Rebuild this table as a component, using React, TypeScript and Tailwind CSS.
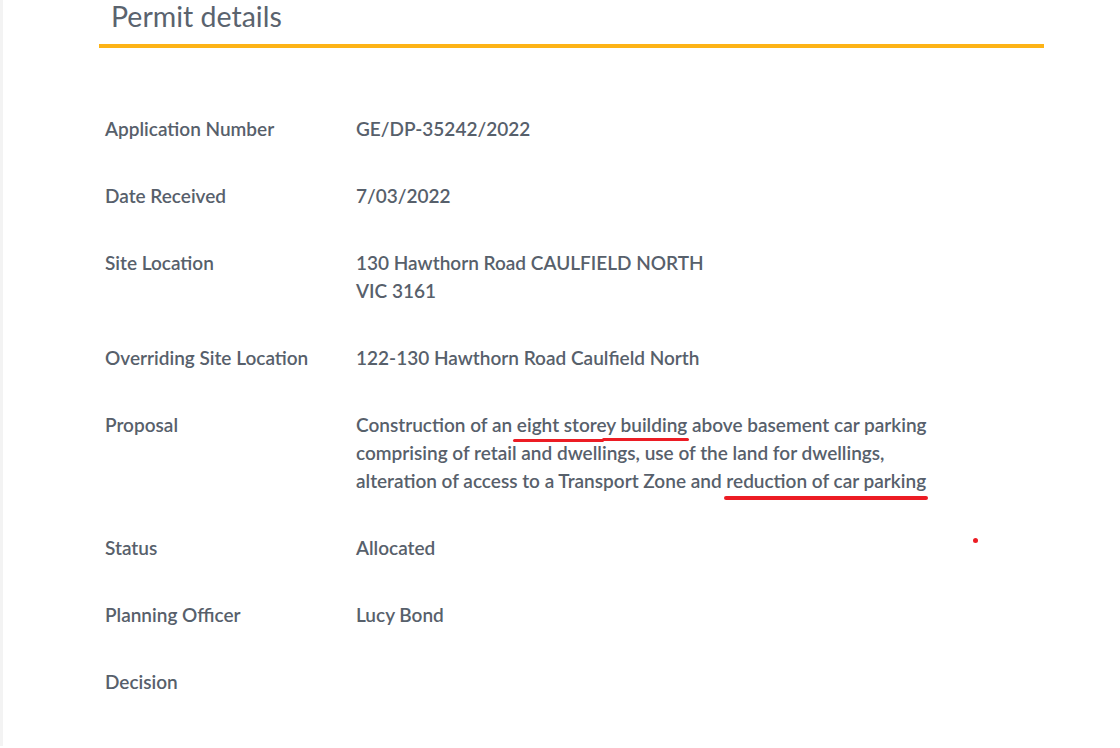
import React from "react";

const rows: { label: string; value?: React.ReactNode }[] = [
  { label: "Application Number", value: "GE/DP-35242/2022" },
  { label: "Date Received", value: "7/03/2022" },
  {
    label: "Site Location",
    value: (
      <>
        130 Hawthorn Road CAULFIELD NORTH
        <br />
        VIC 3161
      </>
    ),
  },
  { label: "Overriding Site Location", value: "122-130 Hawthorn Road Caulfield North" },
  {
    label: "Proposal",
    value: (
      <>
        Construction of an{" "}
        <span className="relative">
          eight storey building
          <span className="absolute left-[-4px] w-[calc(50%+6px)] bottom-[-6px] h-[3px] rounded-full bg-[#ec1c24]" />
          <span className="absolute left-1/2 right-[-2px] bottom-[-5px] h-[3px] rounded-full bg-[#ec1c24]" />
        </span>{" "}
        above basement car parking
        <br />
        comprising of retail and dwellings, use of the land for dwellings,
        <br />
        alteration of access to a Transport Zone and{" "}
        <span className="relative">
          reduction of car parking
          <span className="absolute -left-0.5 -right-0.5 bottom-[-8px] h-[4px] rounded-full bg-[#ec1c24]" />
        </span>
      </>
    ),
  },
  { label: "Status", value: "Allocated" },
  { label: "Planning Officer", value: "Lucy Bond" },
  { label: "Decision" },
];

function PermitDetails() {
  return (
    <div className="relative min-h-[748px] bg-white border-l-[3px] border-[#f3f3f3] font-['Lato','Open_Sans',sans-serif] text-[#57606b]">
      <div className="ml-[96px] w-[945px]">
        <h2 className="pl-3 text-[28.5px] leading-[36px] pb-2 -mt-0.5 text-[#5a636e]">Permit details</h2>
        <div className="h-1 mt-0.5 bg-[#fdb316]" />

        <div className="mt-[67px] pl-[6px] flex flex-col gap-[39px] text-[19px] leading-[28px] font-semibold">
          {rows.map((r) => (
            <div key={r.label} className="flex">
              <div className="w-[251px] shrink-0">{r.label}</div>
              <div>{r.value}</div>
            </div>
          ))}
        </div>
      </div>

      {/* stray red dot */}
      <span className="absolute left-[970px] top-[540px] w-[5px] h-[5px] rounded-full bg-[#ec1c24]" />
    </div>
  );
}

export default function App() {
  return <PermitDetails />;
}
